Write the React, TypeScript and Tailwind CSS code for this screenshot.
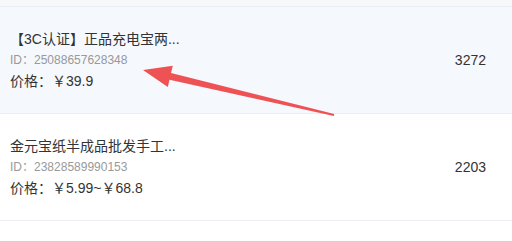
import React from "react"

interface Item {
  title: string
  id: string
  price: string
  count: number
  active?: boolean
}

const items: Item[] = [
  { title: "【3C认证】正品充电宝两...", id: "25088657628348", price: "￥39.9", count: 3272, active: true },
  { title: "金元宝纸半成品批发手工...", id: "23828589990153", price: "￥5.99~￥68.8", count: 2203 },
]

function Row({ item }: { item: Item }) {
  return (
    <div
      className={`flex h-[107px] items-center border-b border-[#ebeef5] pl-[10px] pr-[26px] ${
        item.active ? "bg-[#f5f8fd]" : "bg-white"
      }`}
    >
      <div className="flex-1">
        <div className="text-[14px] leading-[21px] text-[#333]">{item.title}</div>
        <div className="text-[12px] leading-[21px] text-[#999]">ID：{item.id}</div>
        <div className="text-[14px] leading-[21px] text-[#333]">价格：{item.price}</div>
      </div>
      <div className="text-[14px] text-[#333]">{item.count}</div>
    </div>
  )
}

export default function App() {
  return (
    <div
      className="relative h-[241px] w-[512px] overflow-hidden bg-white"
      style={{ fontFamily: '"Liberation Sans", "Noto Sans CJK SC", sans-serif' }}
    >
      <div className="h-[7px] border-b border-[#ebeef5] bg-[#f7f8fa]" />
      {items.map((item) => (
        <Row key={item.id} item={item} />
      ))}
      <svg className="pointer-events-none absolute left-0 top-0" width="512" height="241">
        <polygon
          points="143,70 172.8,65.7 171,73 334.2,114 333.8,116 169.5,79.8 167.8,87.1"
          fill="#ef5254"
        />
      </svg>
    </div>
  )
}
